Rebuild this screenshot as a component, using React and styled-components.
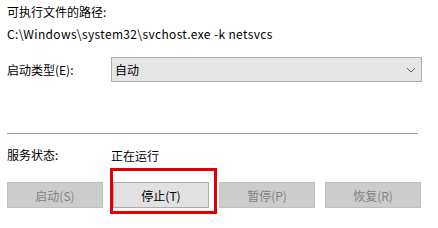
import React from 'react'
import styled, { createGlobalStyle } from 'styled-components'

const GlobalStyle = createGlobalStyle`
    html, body {
        margin: 0;
        padding: 0;
        background: #ffffff;
    }
    body {
        font-family: "Microsoft YaHei", "Noto Sans CJK SC", "Liberation Sans", sans-serif;
        font-size: 12px;
        color: #000;
    }
`;

const Panel = styled.div`
    width: 438px;
    height: 228px;
    box-sizing: border-box;
    padding: 2px 16px 0 7px;
    display: flex;
    flex-direction: column;
    overflow: hidden;
`;

const Line = styled.div`
    height: 20px;
    line-height: 20px;
    white-space: nowrap;
    margin-top: ${p => p.$top || 0}px;
    letter-spacing: ${p => p.$spacing || 0}px;
`;

const Row = styled.div`
    display: flex;
    align-items: center;
    margin-top: ${p => p.$top || 0}px;
`;

const Label = styled.div`
    width: 104px;
    flex: none;
    line-height: 20px;
    white-space: nowrap;
`;

const Select = styled.div`
    flex: 1;
    height: 25px;
    box-sizing: border-box;
    border: 1px solid #adadad;
    background: #e5e5e5;
    display: flex;
    align-items: center;
    justify-content: space-between;
    padding: 0 4px 0 3px;
`;

const Chevron = styled.svg`
    width: 10px;
    height: 6px;
    margin-right: 1px;
`;

const Separator = styled.div`
    height: 1px;
    background: #a0a0a0;
    margin-top: ${p => p.$top}px;
    margin-right: 4px;
`;

const Buttons = styled.div`
    display: flex;
    gap: 10px;
    margin-top: 17px;
`;

const Button = styled.div`
    width: 96px;
    height: 26px;
    box-sizing: border-box;
    border: 1px solid ${p => (p.$disabled ? '#bfbfbf' : '#adadad')};
    background: ${p => (p.$disabled ? '#cccccc' : '#e1e1e1')};
    color: ${p => (p.$disabled ? '#838383' : '#000')};
    display: flex;
    align-items: center;
    justify-content: center;
    white-space: nowrap;
`;

const Highlight = styled.div`
    position: relative;
    &::after {
        content: '';
        position: absolute;
        left: -3px;
        right: -8px;
        top: -14px;
        bottom: -6px;
        border: 3px solid #e00000;
        pointer-events: none;
    }
`;

export default function App() {
  return (
    <>
      <GlobalStyle />
      <Panel>
        <Line>可执行文件的路径:</Line>
        <Line $top={2} $spacing={0.35}>C:\Windows\system32\svchost.exe -k netsvcs</Line>
        <Row $top={13}>
          <Label>启动类型(E):</Label>
          <Select>
            <span>自动</span>
            <Chevron viewBox="0 0 10 6">
              <polyline points="1,1 5,5 9,1" fill="none" stroke="#606060" strokeWidth="1" />
            </Chevron>
          </Select>
        </Row>
        <Separator $top={51} />
        <Row $top={11}>
          <Label>服务状态:</Label>
          <span>正在运行</span>
        </Row>
        <Buttons>
          <Button $disabled>启动(S)</Button>
          <Highlight>
            <Button>停止(T)</Button>
          </Highlight>
          <Button $disabled>暂停(P)</Button>
          <Button $disabled>恢复(R)</Button>
        </Buttons>
      </Panel>
    </>
  )
}
